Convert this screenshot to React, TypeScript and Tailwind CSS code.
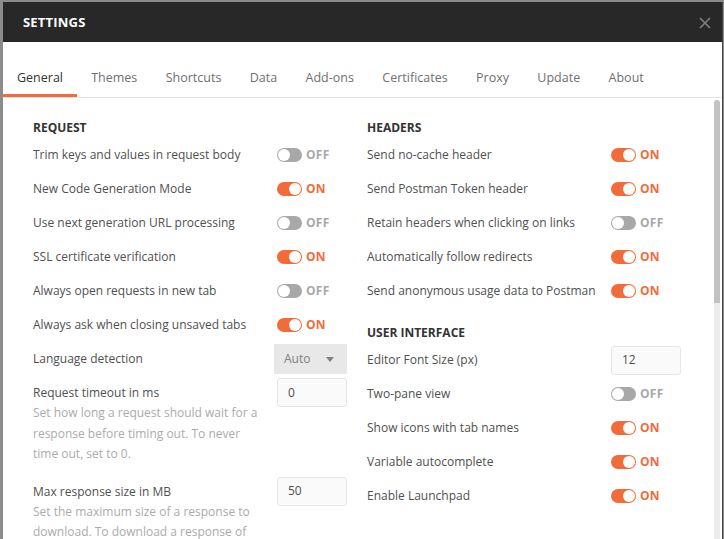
import React from "react";

const tabs = ["General", "Themes", "Shortcuts", "Data", "Add-ons", "Certificates", "Proxy", "Update", "About"];

function Toggle({ on }: { on: boolean }) {
  return (
    <div className="flex items-center gap-[4px]">
      <div
        className={
          on
            ? "w-[25px] h-[14px] rounded-full bg-[#f26b3a] flex items-center justify-end p-[1px]"
            : "w-[25px] h-[14px] rounded-full bg-[#a8a8a8] flex items-center justify-start p-[1px]"
        }
      >
        <div className="w-[12px] h-[12px] rounded-full bg-white" />
      </div>
      <span
        className={
          on
            ? "text-[12px] font-bold text-[#f26b3a] tracking-[0.3px]"
            : "text-[12px] font-bold text-[#a8a8a8] tracking-[0.3px]"
        }
      >
        {on ? "ON" : "OFF"}
      </span>
    </div>
  );
}

function Row({ label, children }: { label: string; children: React.ReactNode }) {
  return (
    <div className="h-[34px] shrink-0 flex items-center">
      <div className="w-[244px] text-[12px] text-[#505050]">{label}</div>
      <div className="w-[70px] flex items-center">{children}</div>
    </div>
  );
}

function Heading({ text }: { text: string }) {
  return <div className="h-[20px] shrink-0 flex items-center text-[12px] font-bold text-[#333]">{text}</div>;
}

function NumInput({ value }: { value: string }) {
  return (
    <div className="w-[70px] h-[29px] shrink-0 border border-[#e6e6e6] bg-[#fafafa] rounded-[3px] flex items-center px-[10px] text-[12px] text-[#505050]">
      {value}
    </div>
  );
}

function DescRow({ label, desc, value }: { label: string; desc: string; value: string }) {
  return (
    <div className="flex items-start pt-[2px] shrink-0">
      <div className="w-[244px] pt-[5px]">
        <div className="text-[12px] leading-[20px] text-[#505050]">{label}</div>
        <div className="w-[232px] text-[12px] leading-[20.5px] text-[#ababab]">{desc}</div>
      </div>
      <NumInput value={value} />
    </div>
  );
}

export default function App() {
  return (
    <div
      className="w-[724px] h-[539px] bg-[#8c8c8c] pl-[3px] pt-[2px] pr-[1px] overflow-hidden"
      style={{ fontFamily: '"Open Sans", "Liberation Sans", sans-serif' }}
    >
      <div className="w-[720px] h-[537px] bg-white flex flex-col border-r border-[#444]">
        {/* Header */}
        <div className="h-[40px] bg-[#282828] flex items-center justify-between pl-[20px] pr-[11px] pt-[2px] shrink-0">
          <span className="text-[13px] font-bold text-white tracking-[0.2px]">SETTINGS</span>
          <svg width="12" height="12" viewBox="0 0 12 12" className="text-[#808080]">
            <path d="M1 1L11 11M11 1L1 11" stroke="currentColor" strokeWidth="1.6" />
          </svg>
        </div>

        {/* Tabs */}
        <div className="h-[56px] flex items-stretch border-b border-[#e2e2e2] shrink-0">
          {tabs.map((t, i) => (
            <div
              key={t}
              className={
                i === 0
                  ? "px-[14px] flex items-center pt-[20px] text-[12.5px] text-[#333] border-b-[3px] border-[#f26b3a]"
                  : "px-[14.2px] flex items-center pt-[20px] text-[12.5px] text-[#707070] border-b-[3px] border-transparent"
              }
            >
              {t}
            </div>
          ))}
        </div>

        {/* Body */}
        <div className="flex-1 flex min-h-0">
          <div className="flex-1 overflow-hidden pl-[30px] pt-[20px] flex items-start gap-[20px]">
            <div className="w-[314px] flex flex-col">
              <Heading text="REQUEST" />
              <Row label="Trim keys and values in request body"><Toggle on={false} /></Row>
              <Row label="New Code Generation Mode"><Toggle on /></Row>
              <Row label="Use next generation URL processing"><Toggle on={false} /></Row>
              <Row label="SSL certificate verification"><Toggle on /></Row>
              <Row label="Always open requests in new tab"><Toggle on={false} /></Row>
              <Row label="Always ask when closing unsaved tabs"><Toggle on /></Row>
              <div className="h-[34px] shrink-0 flex items-center">
                <div className="w-[241px] text-[12px] text-[#505050]">Language detection</div>
                <div className="w-[73px] h-[30px] bg-[#e8e8e8] flex items-center justify-between pl-[10px] pr-[13px] text-[12px] text-[#808080]">
                  <span>Auto</span>
                  <svg width="8" height="5" viewBox="0 0 8 5">
                    <path d="M0 0H8L4 5Z" fill="#808080" />
                  </svg>
                </div>
              </div>
              <DescRow
                label="Request timeout in ms"
                desc="Set how long a request should wait for a response before timing out. To never time out, set to 0."
                value="0"
              />
              <div className="h-[10px] shrink-0" />
              <DescRow
                label="Max response size in MB"
                desc="Set the maximum size of a response to download. To download a response of any size, set to 0."
                value="50"
              />
            </div>
            <div className="w-[314px] flex flex-col">
              <Heading text="HEADERS" />
              <Row label="Send no-cache header"><Toggle on /></Row>
              <Row label="Send Postman Token header"><Toggle on /></Row>
              <Row label="Retain headers when clicking on links"><Toggle on={false} /></Row>
              <Row label="Automatically follow redirects"><Toggle on /></Row>
              <Row label="Send anonymous usage data to Postman"><Toggle on /></Row>
              <div className="h-[15px] shrink-0" />
              <Heading text="USER INTERFACE" />
              <Row label="Editor Font Size (px)"><NumInput value="12" /></Row>
              <Row label="Two-pane view"><Toggle on={false} /></Row>
              <Row label="Show icons with tab names"><Toggle on /></Row>
              <Row label="Variable autocomplete"><Toggle on /></Row>
              <Row label="Enable Launchpad"><Toggle on /></Row>
            </div>
          </div>
          {/* Scrollbar */}
          <div className="w-[8px] pr-[2px] pt-[2px] flex flex-col shrink-0">
            <div className="h-[203px] bg-[#c2c2c2] rounded-t-full" />
            <div className="flex-1 bg-[#ececec]" />
          </div>
        </div>
      </div>
    </div>
  );
}
